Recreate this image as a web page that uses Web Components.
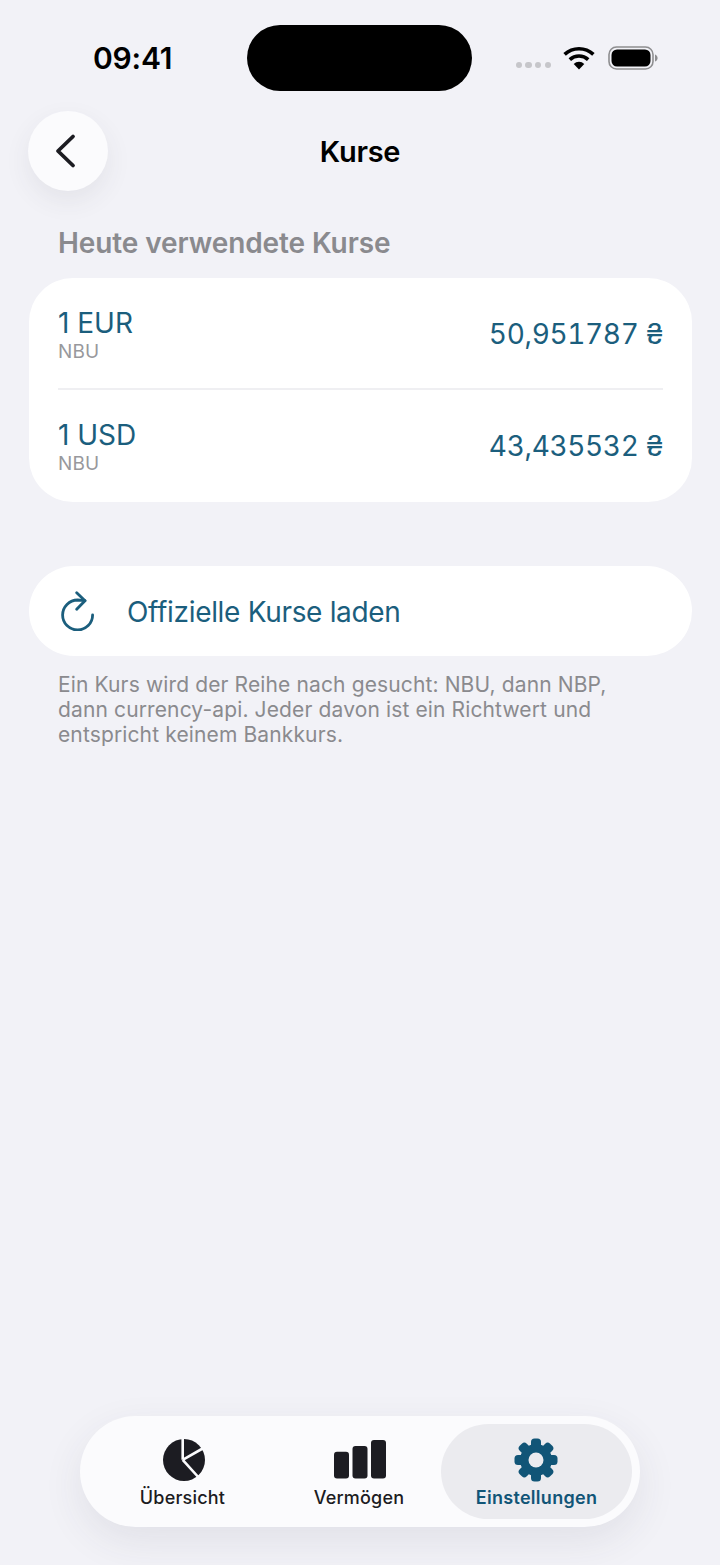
<!DOCTYPE html>
<html lang="de">
<head>
<meta charset="utf-8">
<title>Kurse</title>
<style>
    html, body { margin: 0; height: 100%; background: #f2f2f7; }
    body { font-family: Inter, "Noto Sans", sans-serif; overflow: hidden; }
</style>
</head>
<body>
<rates-app>
    <status-bar slot="top"></status-bar>
    <nav-header slot="top" title="Kurse"></nav-header>
    <section-label>Heute verwendete Kurse</section-label>
    <rate-card>
        <rate-row currency="1 EUR" source="NBU" value="50,951787 ₴"></rate-row>
        <rate-row currency="1 USD" source="NBU" value="43,435532 ₴" last></rate-row>
    </rate-card>
    <reload-button>Offizielle Kurse laden</reload-button>
    <foot-note>Ein Kurs wird der Reihe nach gesucht: NBU, dann NBP, dann currency-api. Jeder davon ist ein Richtwert und entspricht keinem Bankkurs.</foot-note>
    <tab-bar slot="bottom">
        <tab-item label="Übersicht" icon="pie"></tab-item>
        <tab-item label="Vermögen" icon="bars"></tab-item>
        <tab-item label="Einstellungen" icon="gear" active></tab-item>
    </tab-bar>
</rates-app>

<script>
const ICONS = {
    // slits are stroked in the tab bar colour over a full disc
    pie: `<svg width="44" height="44" viewBox="0 0 44 44" style="margin-left:2px">
        <circle cx="22" cy="22" r="21" fill="#1c1c22"/>
        <path d="M20.7 0v21.8M20.7 21.8L41.5 10M20.7 21.8L38 41" fill="none" stroke="#fbfbfd" stroke-width="2.6"/>
    </svg>`,
    bars: `<svg width="54" height="44" viewBox="0 0 54 44" fill="#1c1c22" style="margin-left:2px">
        <rect x="1" y="13.7" width="15" height="26.8" rx="3"/>
        <rect x="19.5" y="8" width="15" height="32.5" rx="3"/>
        <rect x="38" y="2" width="15" height="38.5" rx="3"/>
    </svg>`,
    gear: `<svg width="46" height="46" viewBox="0 0 46 46" style="margin-left:-2px">
        <g fill="#115577">
            <circle cx="23" cy="23" r="16"/>
            <rect x="18" y="1.5" width="10" height="43" rx="3.5"/>
            <rect x="18" y="1.5" width="10" height="43" rx="3.5" transform="rotate(45 23 23)"/>
            <rect x="18" y="1.5" width="10" height="43" rx="3.5" transform="rotate(90 23 23)"/>
            <rect x="18" y="1.5" width="10" height="43" rx="3.5" transform="rotate(135 23 23)"/>
        </g>
        <circle cx="23" cy="23" r="7.5" fill="#ebebef"/>
    </svg>`
};

class RatesApp extends HTMLElement {
    constructor() {
        super();
        this.attachShadow({ mode: 'open' });
        this.shadowRoot.innerHTML = `
            <style>
                :host { display: flex; flex-direction: column; height: 1565px; box-sizing: border-box; background: #f2f2f7; }
                main { display: flex; flex-direction: column; padding: 0 28px; flex: 1; }
                footer { display: flex; justify-content: center; padding-bottom: 38px; }
            </style>
            <slot name="top"></slot>
            <main><slot></slot></main>
            <footer><slot name="bottom"></slot></footer>
        `;
    }
}

class StatusBar extends HTMLElement {
    constructor() {
        super();
        this.attachShadow({ mode: 'open' });
        this.shadowRoot.innerHTML = `
            <style>
                :host { display: flex; height: 111px; box-sizing: border-box; padding: 25px 62px 0 93px; align-items: flex-start; }
                .time { width: 154px; font: 600 30px/66px Inter, sans-serif; letter-spacing: -0.2px; color: #000; }
                .island { width: 225px; height: 66px; border-radius: 33px; background: #000; }
                .right { flex: 1; display: flex; align-items: flex-start; justify-content: flex-end; padding-top: 21px; }
                .dots { display: flex; gap: 3.5px; margin: 16px 12px 0 0; }
                .dots i { width: 6.2px; height: 6.2px; border-radius: 3px; background: #c6c6ca; }
                svg { display: block; }
                .wifi { margin-right: 13px; }
            </style>
            <div class="time">09:41</div>
            <div class="island"></div>
            <div class="right">
                <div class="dots"><i></i><i></i><i></i><i></i></div>
                <svg class="wifi" width="32" height="24" viewBox="0 0 32 24" fill="none" stroke="#000" stroke-width="3.6">
                    <path d="M1.6 8.4a21 21 0 0 1 28.8 0"/>
                    <path d="M6.8 13.6a13.6 13.6 0 0 1 18.4 0"/>
                    <path d="M16 23.5l-5.3-5.5a7.6 7.6 0 0 1 10.6 0z" fill="#000" stroke="none"/>
                </svg>
                <svg width="50" height="24" viewBox="0 0 50 24">
                    <rect x="1" y="1" width="44" height="22" rx="7.5" fill="none" stroke="#8e8e90" stroke-width="1.6"/>
                    <rect x="3.5" y="3.5" width="39" height="17" rx="5.5" fill="#000"/>
                    <path d="M47 8.5c1.6.5 2.6 2 2.6 3.5s-1 3-2.6 3.5z" fill="#8e8e90"/>
                </svg>
            </div>
        `;
    }
}

class NavHeader extends HTMLElement {
    constructor() {
        super();
        this.attachShadow({ mode: 'open' });
        this.shadowRoot.innerHTML = `
            <style>
                :host { display: block; position: relative; height: 80px; padding: 0 28px; }
                .back {
                    width: 80px; height: 80px; border-radius: 50%; background: #fbfbfd;
                    box-shadow: 0 10px 26px rgba(60, 60, 80, 0.08);
                    display: flex; align-items: center; justify-content: center;
                }
                h1 {
                    position: absolute; inset: 0; margin: 0; display: flex; align-items: center; justify-content: center;
                    font: 600 29px/1 Inter, sans-serif; letter-spacing: -0.3px; color: #000;
                }
            </style>
            <div class="back">
                <svg width="24" height="36" viewBox="0 0 24 36" fill="none" stroke="#1c1c22" stroke-width="3.8" stroke-linecap="round" stroke-linejoin="round" style="margin-left:-7px">
                    <path d="M20 3.5L5 18l15 14.5"/>
                </svg>
            </div>
            <h1>${this.getAttribute('title')}</h1>
        `;
    }
}

class SectionLabel extends HTMLElement {
    constructor() {
        super();
        this.attachShadow({ mode: 'open' });
        this.shadowRoot.innerHTML = `
            <style>
                :host { display: block; padding: 35px 0 17px 30px; font: 600 28px/35px Inter, sans-serif; letter-spacing: -0.1px; color: #8a8a8e; }
            </style>
            <slot></slot>
        `;
    }
}

class RateCard extends HTMLElement {
    constructor() {
        super();
        this.attachShadow({ mode: 'open' });
        this.shadowRoot.innerHTML = `
            <style>
                :host { display: block; background: #fff; border-radius: 44px; padding: 0 29px; margin: 0 0 64px 1px; }
            </style>
            <slot></slot>
        `;
    }
}

class RateRow extends HTMLElement {
    constructor() {
        super();
        this.attachShadow({ mode: 'open' });
        this.shadowRoot.innerHTML = `
            <style>
                :host { display: flex; height: 112px; box-sizing: border-box; padding-top: 5px; align-items: center; justify-content: space-between; border-bottom: 2px solid #efeff2; }
                :host([last]) { border-bottom-color: transparent; }
                .cur { font: 400 28px/32px Inter, sans-serif; letter-spacing: 0; color: #1b5e7d; }
                .src { font: 400 19px/24px Inter, sans-serif; letter-spacing: 0.1px; color: #98989c; margin-top: 1px; }
                .val { font: 400 28px/32px Inter, "DejaVu Sans", sans-serif; font-variant-numeric: tabular-nums; letter-spacing: -0.35px; color: #1b5e7d; margin-top: -3px; }
            </style>
            <div>
                <div class="cur">${this.getAttribute('currency')}</div>
                <div class="src">${this.getAttribute('source')}</div>
            </div>
            <div class="val">${this.getAttribute('value')}</div>
        `;
    }
}

class ReloadButton extends HTMLElement {
    constructor() {
        super();
        this.attachShadow({ mode: 'open' });
        this.shadowRoot.innerHTML = `
            <style>
                :host {
                    display: flex; align-items: center; gap: 32px; height: 90px; margin-left: 1px; padding-left: 32px;
                    background: #fff; border-radius: 45px;
                    font: 400 28px/34px Inter, sans-serif; letter-spacing: -0.32px; color: #1b5e7d;
                }
            </style>
            <svg width="34" height="40" viewBox="0 0 34 40" fill="none" stroke="#1b5e7d" stroke-width="2.8" stroke-linecap="round" stroke-linejoin="round">
                <path d="M31.6 24A15 15 0 1 1 16.6 9L24 9.6"/>
                <path d="M15.7 1.7L24 9.7l-8.3 8.6"/>
            </svg>
            <span style="padding-top:2px"><slot></slot></span>
        `;
    }
}

class FootNote extends HTMLElement {
    constructor() {
        super();
        this.attachShadow({ mode: 'open' });
        this.shadowRoot.innerHTML = `
            <style>
                :host { display: block; width: 590px; padding: 16px 0 0 30px; font: 400 21px/25px Inter, sans-serif; letter-spacing: 0.13px; color: #8a8a8e; }
            </style>
            <slot></slot>
        `;
    }
}

class TabBar extends HTMLElement {
    constructor() {
        super();
        this.attachShadow({ mode: 'open' });
        this.shadowRoot.innerHTML = `
            <style>
                :host {
                    display: grid; grid-template-columns: 189px 164px 191px; width: 560px; height: 111px; box-sizing: border-box; padding: 8px;
                    background: #fbfbfd; border-radius: 56px; box-shadow: 0 14px 40px rgba(60, 60, 80, 0.09);
                }
            </style>
            <slot></slot>
        `;
    }
}

class TabItem extends HTMLElement {
    constructor() {
        super();
        this.attachShadow({ mode: 'open' });
        this.shadowRoot.innerHTML = `
            <style>
                :host {
                    display: flex; flex-direction: column; align-items: center; justify-content: flex-start;
                    padding-top: 13px; gap: 3px; border-radius: 48px; color: #1c1c22;
                    font: 500 18px/24px Inter, sans-serif; letter-spacing: 0.2px;
                }
                :host([active]) { background: #ebebef; color: #115577; font-weight: 600; letter-spacing: 0.3px; }
                .icon { height: 46px; display: flex; align-items: center; justify-content: center; }
                svg { display: block; }
            </style>
            <div class="icon">${ICONS[this.getAttribute('icon')]}</div>
            <div>${this.getAttribute('label')}</div>
        `;
    }
}

customElements.define('rates-app', RatesApp);
customElements.define('status-bar', StatusBar);
customElements.define('nav-header', NavHeader);
customElements.define('section-label', SectionLabel);
customElements.define('rate-card', RateCard);
customElements.define('rate-row', RateRow);
customElements.define('reload-button', ReloadButton);
customElements.define('foot-note', FootNote);
customElements.define('tab-bar', TabBar);
customElements.define('tab-item', TabItem);
</script>
</body>
</html>
